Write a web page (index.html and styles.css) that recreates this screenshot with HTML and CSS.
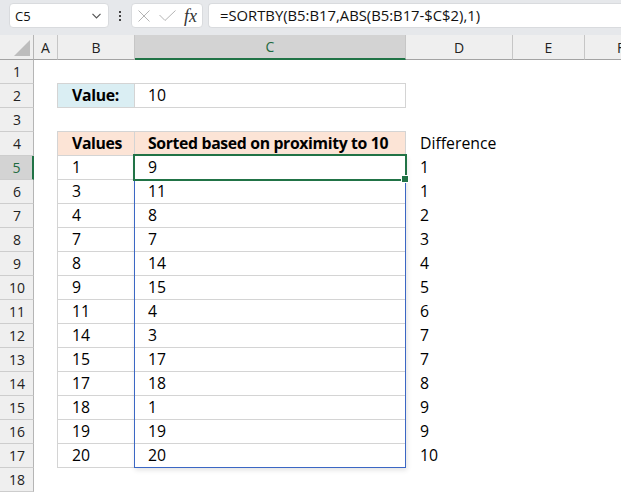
FILE: index.html
```html
<!DOCTYPE html>
<html lang="en">
<head>
<meta charset="utf-8">
<title>SORTBY proximity</title>
<link rel="stylesheet" href="styles.css">
</head>
<body>
<div class="app">
  <div class="topbar">
    <div class="namebox">
      <span class="ref">C5</span>
      <svg class="chev" width="9" height="6" viewBox="0 0 9 6"><path d="M0.5 0.8 L4.5 4.8 L8.5 0.8" fill="none" stroke="#555" stroke-width="1.2"/></svg>
    </div>
    <div class="dots"><i></i><i></i><i></i></div>
    <div class="fxbox">
      <svg class="ico" width="12" height="12" viewBox="0 0 12 12"><path d="M0.5 0.5 L11.5 11.5 M11.5 0.5 L0.5 11.5" stroke="#b4b4b4" stroke-width="1" fill="none"/></svg>
      <svg class="ico" width="17" height="11" viewBox="0 0 17 11"><path d="M0.5 5 L6 10.5 L16.5 0.5" stroke="#b4b4b4" stroke-width="1" fill="none"/></svg>
      <span class="fx">fx</span>
    </div>
    <div class="formula">=SORTBY(B5:B17,ABS(B5:B17-$C$2),1)</div>
  </div>

  <div class="sheet">
    <div class="ch corner"><span class="tri"></span></div>
    <div class="ch">A</div>
    <div class="ch">B</div>
    <div class="ch on">C</div>
    <div class="ch">D</div>
    <div class="ch">E</div>
    <div class="ch">F</div>

    <div class="rh">1</div><div class="c"></div><div class="c"></div><div class="c"></div><div class="c"></div><div class="c"></div><div class="c"></div>

    <div class="rh">2</div><div class="c"></div><div class="c bd lbl">Value:</div><div class="c cc bd">10</div><div class="c"></div><div class="c"></div><div class="c"></div>

    <div class="rh">3</div><div class="c"></div><div class="c"></div><div class="c"></div><div class="c"></div><div class="c"></div><div class="c"></div>

    <div class="rh">4</div><div class="c"></div><div class="c bd hd">Values</div><div class="c cc bd hd">Sorted based on proximity to 10</div><div class="c">Difference</div><div class="c"></div><div class="c"></div>

    <div class="rh on">5</div><div class="c"></div><div class="c bd">1</div><div class="c cc bd active">9<span class="spill"></span><span class="selbox"></span></div><div class="c">1</div><div class="c"></div><div class="c"></div>

    <div class="rh">6</div><div class="c"></div><div class="c bd">3</div><div class="c cc bd">11</div><div class="c">1</div><div class="c"></div><div class="c"></div>

    <div class="rh">7</div><div class="c"></div><div class="c bd">4</div><div class="c cc bd">8</div><div class="c">2</div><div class="c"></div><div class="c"></div>

    <div class="rh">8</div><div class="c"></div><div class="c bd">7</div><div class="c cc bd">7</div><div class="c">3</div><div class="c"></div><div class="c"></div>

    <div class="rh">9</div><div class="c"></div><div class="c bd">8</div><div class="c cc bd">14</div><div class="c">4</div><div class="c"></div><div class="c"></div>

    <div class="rh">10</div><div class="c"></div><div class="c bd">9</div><div class="c cc bd">15</div><div class="c">5</div><div class="c"></div><div class="c"></div>

    <div class="rh">11</div><div class="c"></div><div class="c bd">11</div><div class="c cc bd">4</div><div class="c">6</div><div class="c"></div><div class="c"></div>

    <div class="rh">12</div><div class="c"></div><div class="c bd">14</div><div class="c cc bd">3</div><div class="c">7</div><div class="c"></div><div class="c"></div>

    <div class="rh">13</div><div class="c"></div><div class="c bd">15</div><div class="c cc bd">17</div><div class="c">7</div><div class="c"></div><div class="c"></div>

    <div class="rh">14</div><div class="c"></div><div class="c bd">17</div><div class="c cc bd">18</div><div class="c">8</div><div class="c"></div><div class="c"></div>

    <div class="rh">15</div><div class="c"></div><div class="c bd">18</div><div class="c cc bd">1</div><div class="c">9</div><div class="c"></div><div class="c"></div>

    <div class="rh">16</div><div class="c"></div><div class="c bd">19</div><div class="c cc bd">19</div><div class="c">9</div><div class="c"></div><div class="c"></div>

    <div class="rh">17</div><div class="c"></div><div class="c bd">20</div><div class="c cc bd">20</div><div class="c">10</div><div class="c"></div><div class="c"></div>

    <div class="rh">18</div><div class="c"></div><div class="c"></div><div class="c"></div><div class="c"></div><div class="c"></div><div class="c"></div>
  </div>
</div>
</body>
</html>
```

FILE: styles.css
```css
* { box-sizing: border-box; margin: 0; padding: 0; }
html, body { width: 621px; height: 493px; overflow: hidden; background: #fff; }
body { font-family: "Open Sans", "Noto Sans", sans-serif; color: #000; }
.app { width: 680px; }

/* formula bar */
.topbar {
  height: 35px;
  background: #e6e8eb;
  display: flex;
  align-items: flex-start;
  padding-top: 3px;
}
.namebox {
  margin-left: 9px;
  width: 100px;
  height: 25px;
  background: #fff;
  border: 1px solid #d9dbde;
  border-radius: 4px;
  display: flex;
  align-items: center;
  justify-content: space-between;
  padding: 0 7px 0 5px;
  font-size: 13px;
  color: #111;
}
.chev { display: block; margin-top: 1px; }
.dots {
  width: 22px;
  height: 25px;
  display: flex;
  flex-direction: column;
  align-items: center;
  justify-content: center;
  gap: 2px;
}
.dots i { display: block; width: 2px; height: 2px; background: #444; }
.fxbox {
  width: 72px;
  height: 25px;
  background: #fff;
  border: 1px solid #d9dbde;
  border-radius: 4px;
  display: flex;
  align-items: center;
  padding-left: 6px;
  gap: 9px;
}
.ico { display: block; }
.fx {
  font-family: "Liberation Serif", "DejaVu Serif", serif;
  font-style: italic;
  font-size: 18px;
  color: #333;
  margin-left: -1px;
  line-height: 1;
}
.formula {
  margin-left: 5px;
  flex: 1;
  height: 25px;
  background: #fff;
  border: 1px solid #d9dbde;
  border-right: none;
  border-radius: 4px 0 0 4px;
  padding-left: 11px;
  font-size: 14.8px;
  line-height: 23px;
  color: #111;
  white-space: nowrap;
}

/* sheet grid */
.sheet {
  display: grid;
  grid-template-columns: 34px 24px 77px 271px 107px 72px 72px;
  grid-template-rows: 25px repeat(18, 24px);
}
.ch {
  background: #efefef;
  border-right: 1px solid #c6c6c6;
  border-bottom: 1px solid #a3a3a3;
  display: flex;
  align-items: center;
  justify-content: center;
  font-size: 14px;
  color: #222;
}
.ch.on {
  background: #d3d3d3;
  color: #1d6a40;
  border-bottom: 2px solid #217346;
}
.corner { position: relative; border-right-color: #b5b5b5; }
.tri {
  position: absolute;
  right: 3px;
  bottom: 3px;
  width: 16px;
  height: 16px;
  background: #bdbdbd;
  clip-path: polygon(100% 0, 100% 100%, 0 100%);
}
.rh {
  background: #efefef;
  border-right: 1px solid #b5b5b5;
  border-bottom: 1px solid #cdcdcd;
  display: flex;
  align-items: center;
  justify-content: center;
  padding-left: 1px;
  font-size: 14px;
  color: #222;
}
.rh.on {
  background: #d3d3d3;
  color: #1d6a40;
  border-right: 2px solid #217346;
}

.c {
  border-right: 1px solid transparent;
  border-bottom: 1px solid transparent;
  font-size: 15.8px;
  line-height: 23px;
  padding-left: 14px;
  white-space: nowrap;
}
.cc { padding-left: 13px; }
.bd {
  border-color: #d4d4d4;
  box-shadow: -1px 0 0 #d4d4d4, 0 -1px 0 #d4d4d4, -1px -1px 0 #d4d4d4;
}
.lbl { background: #daeef3; font-weight: 700; letter-spacing: -0.3px; }
.hd { background: #fce4d6; font-weight: 700; letter-spacing: -0.35px; }

/* spill range and active cell overlays */
.active { position: relative; }
.spill {
  position: absolute;
  left: -1px;
  top: -1px;
  right: -1px;
  height: 313px;
  border: 1px solid #3b67c4;
  box-shadow: 1px 2px 5px rgba(0, 0, 0, 0.12);
  pointer-events: none;
}
.selbox {
  position: absolute;
  left: -2px;
  top: -2px;
  right: -2px;
  bottom: -2px;
  border: 2px solid #217346;
  pointer-events: none;
}
.selbox::after {
  content: "";
  position: absolute;
  right: -4px;
  bottom: -4px;
  width: 6px;
  height: 6px;
  background: #217346;
  border: 1px solid #fff;
}
```
